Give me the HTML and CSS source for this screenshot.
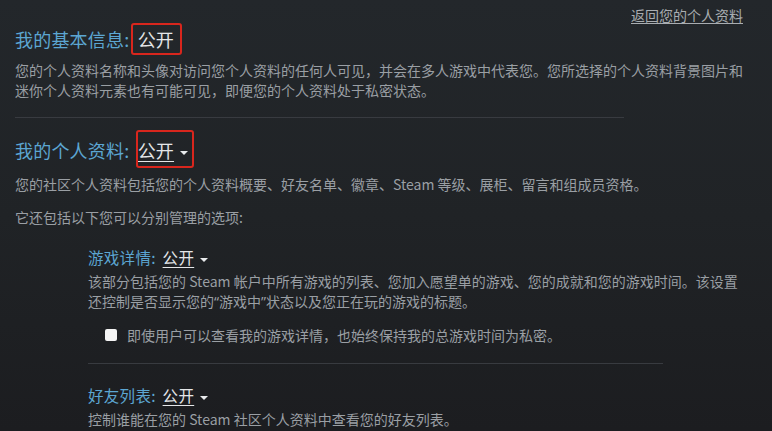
FILE: index.html
```html
<!DOCTYPE html>
<html lang="zh-CN">
<head>
<meta charset="utf-8">
<title>隐私设置</title>
<link rel="stylesheet" href="styles.css">
</head>
<body>
<div class="page">
  <div class="toprow"><a class="back" href="#">返回您的个人资料</a></div>

  <h2 class="title">我的基本信息: <span class="val mark mark1">公开</span></h2>
  <p class="desc wide">您的个人资料名称和头像对访问您个人资料的任何人可见，并会在多人游戏中代表您。您所选择的个人资料背景图片和迷你个人资料元素也有可能可见，即便您的个人资料处于私密状态。</p>

  <div class="rule rule1"></div>

  <h2 class="title t2">我的个人资料: <span class="mark mark2"><span class="val ul">公开</span><span class="caret"></span></span></h2>
  <p class="desc d2">您的社区个人资料包括您的个人资料概要、好友名单、徽章、Steam 等级、展柜、留言和组成员资格。</p>
  <p class="desc d3">它还包括以下您可以分别管理的选项:</p>

  <div class="sub">
    <h3 class="subtitle">游戏详情: <span class="val ul subval">公开</span><span class="caret"></span></h3>
    <p class="desc subdesc">该部分包括您的 Steam 帐户中所有游戏的列表、您加入愿望单的游戏、您的成就和您的游戏时间。该设置还控制是否显示您的<span class="q">“</span>游戏中<span class="q">”</span>状态以及您正在玩的游戏的标题。</p>
    <label class="check"><span class="box"></span><span class="checktext">即使用户可以查看我的游戏详情，也始终保持我的总游戏时间为私密。</span></label>
    <div class="rule rule2"></div>
    <h3 class="subtitle s2">好友列表: <span class="val ul subval">公开</span><span class="caret"></span></h3>
    <p class="desc subdesc">控制谁能在您的 Steam 社区个人资料中查看您的好友列表。</p>
  </div>
</div>
</body>
</html>
```

FILE: styles.css
```css
html, body {
  margin: 0;
  height: 100%;
}
body {
  background: linear-gradient(180deg, #23272b 0%, #202326 50%, #1c1d20 100%);
  font-family: "Noto Sans CJK SC", "Noto Sans", sans-serif;
  color: #9a9fa4;
  overflow: hidden;
}
.page {
  padding: 5px 29px 0 15px;
}
.toprow {
  display: flex;
  justify-content: flex-end;
  line-height: 20px;
  font-size: 14px;
}
.back {
  color: #a9adb1;
  text-decoration: underline;
  text-underline-offset: 2px;
}
.title {
  margin: 1px 0 0;
  font-size: 18px;
  line-height: 26px;
  font-weight: normal;
  color: #5ca6d2;
  letter-spacing: 0.2px;
}
.title.t2 {
  margin-top: 19px;
}
.val {
  color: #e4e6e8;
}
.ul {
  text-decoration: underline;
  text-underline-offset: 3px;
  text-decoration-thickness: 1px;
}
.subval {
  margin-left: 3px;
}
.q {
  font-family: "Noto Sans", sans-serif;
}
.mark {
  position: relative;
  margin-left: 4px;
}
.mark::after {
  content: "";
  position: absolute;
  border: 2px solid #d8261d;
  border-radius: 3px;
  box-sizing: border-box;
}
.mark1::after {
  left: -7px;
  right: -8px;
  top: -3px;
  bottom: -3px;
}
.mark2::after {
  left: -2px;
  right: -6px;
  top: -7px;
  bottom: -5px;
}
.caret {
  display: inline-block;
  width: 0;
  height: 0;
  margin-left: 6px;
  vertical-align: middle;
  border-left: 4px solid transparent;
  border-right: 4px solid transparent;
  border-top: 4px solid #e8eaec;
}
.desc {
  margin: 8px 0 0;
  font-size: 14px;
  line-height: 20px;
}
.wide {
  max-width: 735px;
}
.d2 {
  margin-top: 11px;
}
.d3 {
  margin-top: 13px;
}
.rule {
  height: 1px;
  background: #383b40;
}
.rule1 {
  width: 609px;
  margin-top: 17px;
}
.sub {
  margin-left: 73px;
}
.subtitle {
  margin: 18px 0 0;
  font-size: 15.5px;
  line-height: 24px;
  font-weight: normal;
  color: #5ca6d2;
  letter-spacing: 0.3px;
}
.subtitle.s2 {
  margin-top: 19px;
}
.subdesc {
  margin-top: 2px;
  max-width: 660px;
}
.check {
  display: flex;
  align-items: center;
  margin-top: 13px;
  padding-left: 17px;
  height: 20px;
  font-size: 14px;
}
.box {
  width: 12px;
  height: 12px;
  background: #f4f4f4;
  border-radius: 2px;
  margin-right: 10px;
}
.rule2 {
  width: 575px;
  margin-top: 18px;
}
```
